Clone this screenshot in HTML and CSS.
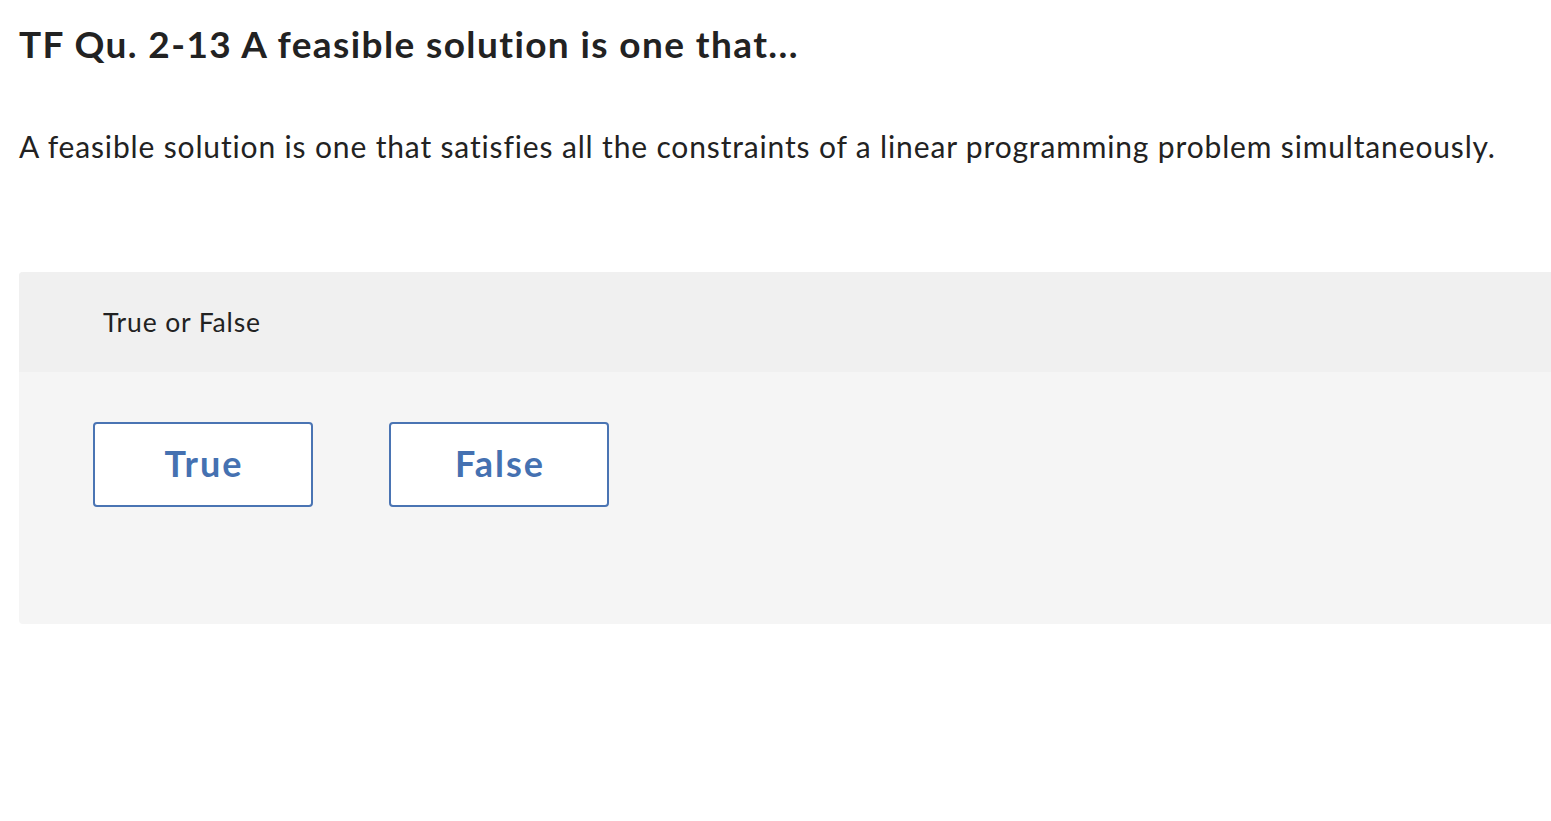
FILE: index.html
```html
<!DOCTYPE html>
<html>
<head>
<meta charset="utf-8">
<link rel="stylesheet" href="styles.css">
</head>
<body>
<main class="page">
  <h1 class="title">TF Qu. 2-13 A feasible solution is one that...</h1>
  <p class="prompt">A feasible solution is one that satisfies all the constraints of a linear programming problem simultaneously.</p>
  <section class="card">
    <div class="card-head">True or False</div>
    <div class="card-body">
      <button class="choice">True</button>
      <button class="choice">False</button>
    </div>
  </section>
</main>
</body>
</html>
```
FILE: styles.css
```css
html, body {
  margin: 0;
  padding: 0;
  background: #fff;
}
body {
  font-family: Lato, "Open Sans", sans-serif;
  color: #222;
}
.page {
  padding: 22px 0 0 19px;
}
.title {
  margin: 0;
  font-size: 37px;
  line-height: 44px;
  font-weight: 700;
  letter-spacing: 1.4px;
  color: #222;
}
.prompt {
  margin: 60px 0 0 0;
  font-size: 30px;
  line-height: 40px;
  font-weight: 400;
  letter-spacing: 0.85px;
  color: #222;
}
.card {
  margin-top: 106px;
  border-radius: 4px 0 0 4px;
  overflow: hidden;
  background: #f5f5f5;
}
.card-head {
  height: 100px;
  background: #f0f0f0;
  display: flex;
  align-items: center;
  padding-left: 84px;
  font-size: 26.5px;
  letter-spacing: 0.85px;
  color: #222;
}
.card-body {
  height: 252px;
  box-sizing: border-box;
  padding: 50px 0 0 74px;
  display: flex;
  align-items: flex-start;
  gap: 76px;
}
.choice {
  width: 220px;
  height: 85px;
  box-sizing: border-box;
  border: 2px solid #4a74b3;
  border-radius: 4px;
  background: #fff;
  color: #4571b1;
  font-family: Lato, "Open Sans", sans-serif;
  font-size: 36px;
  font-weight: 700;
  letter-spacing: 2px;
  padding: 0 0 4px 2px;
}
```
